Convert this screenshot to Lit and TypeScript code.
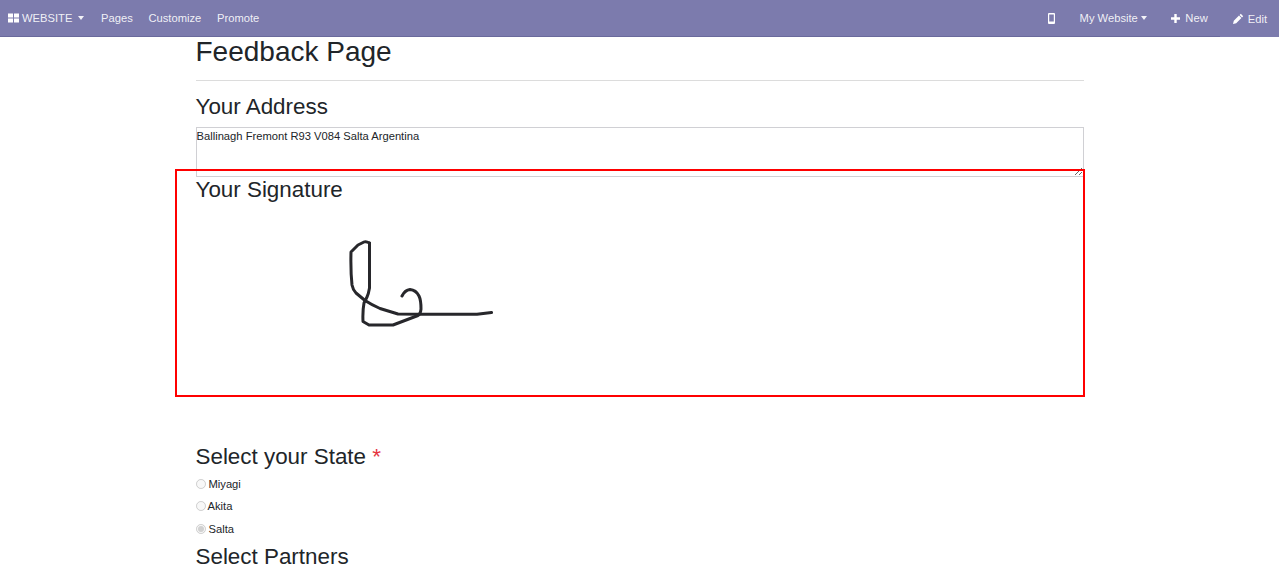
import { LitElement, html, css, svg } from "lit";
import { customElement } from "lit/decorators.js";

@customElement("app-root")
export class AppRoot extends LitElement {
  static styles = css`
    :host { display: block; height: 576px; overflow: hidden; position: relative; background: #fff;
      font-family: "Liberation Sans", Arial, sans-serif; color: #212529; }
    .nav { height: 36px; border-bottom: 1px solid #6a6a9c; background: #7c7bad; color: #fff; display: flex;
      align-items: flex-start; justify-content: space-between; font-size: 11.2px; }
    .group { display: flex; align-items: center; height: 36px; }
    .item { display: flex; align-items: center; gap: 4px; color: rgba(255,255,255,.9); white-space: nowrap; }
    .left .item { margin-left: 15.7px; }
    .left .item.brand { margin-left: 8px; gap: 3px; }
    .caret { width: 0; height: 0; border-left: 3.5px solid transparent; border-right: 3.5px solid transparent;
      border-top: 4px solid rgba(255,255,255,.9); }
    .brand .caret { margin: 0 1.5px 0 2.5px; }
    .right .phone { margin-right: 24.5px; }
    .right .site { margin-right: 24px; gap: 3.5px; }
    .right .new { margin-right: 12px; gap: 5px; }
    .right .edit { box-sizing: border-box; height: 37px; align-self: flex-start; padding: 0 12px 0 13px; gap: 4px;
      background: #7c7bad; }
    svg.i { fill: #fff; display: block; }
    .main { width: 888px; margin: 0 auto; }
    h1 { font-size: 28px; font-weight: 400; line-height: 33.6px; margin: -2px 0 0; }
    hr { border: 0; border-top: 1px solid #dcdcdc; margin: 11px 0 13px; }
    h2 { font-size: 22.4px; font-weight: 400; line-height: 26.88px; margin: 0; }
    .addr { box-sizing: border-box; width: 888px; height: 50px; margin-top: 6.5px; display: block; border: 1px solid #d0d0d4;
      padding: 2px 0; font: 11.2px/13px "Liberation Sans", Arial, sans-serif; color: #212529; border-radius: 0; outline: 0; }
    .sig { display: block; width: 888px; height: 240px; }
    .sig path { fill: none; stroke: #27272b; stroke-width: 3; stroke-linecap: round; stroke-linejoin: round; }
    .req { color: #e5343f; }
    .radios { display: flex; flex-direction: column; font-size: 11.2px; margin: 2px 0 4px; }
    .radio { display: flex; align-items: center; height: 22.5px; }
    .radio input { width: 10px; height: 10px; margin: 0 3px 0 0; }
    .radio.tight input { margin-right: 2px; }
    .mark { position: absolute; left: 175px; top: 169px; width: 910px; height: 228px; box-sizing: border-box;
      border: 2px solid #f00; pointer-events: none; }
  `;

  render() {
    return html`
      <div class="nav">
        <div class="group left">
          <span class="item brand">
            <svg class="i" width="11" height="10" viewBox="0 0 11 10"><path d="M0 .5h5v4H0zM6 .5h5v4H6zM0 5.500h5v4H0zM6 5.500h5v4H6z"/></svg>
            WEBSITE<span class="caret"></span>
          </span>
          <span class="item">Pages</span>
          <span class="item">Customize</span>
          <span class="item">Promote</span>
        </div>
        <div class="group right">
          <span class="item phone">
            <svg class="i" width="7" height="11" viewBox="0 0 7 11"><path fill-rule="evenodd" d="M1 0h5a1 1 0 0 1 1 1v9a1 1 0 0 1-1 1H1a1 1 0 0 1-1-1V1a1 1 0 0 1 1-1zm.2 1.600v7h4.600v-7z"/></svg>
          </span>
          <span class="item site">My Website<span class="caret"></span></span>
          <span class="item new">
            <svg class="i" width="9" height="9" viewBox="0 0 9 9"><path d="M3.300 0h2.400v3.300H9v2.400H5.700V9H3.300V5.700H0V3.300h3.300z"/></svg>
            New
          </span>
          <span class="item edit">
            <svg class="i" width="11" height="11" viewBox="0 0 11 11"><path d="M7.800.8l2.400 2.400-1.200 1.200-2.400-2.400zM6 2.600 8.400 5 3.200 10.200 0 11l.8-3.200z"/></svg>
            Edit
          </span>
        </div>
      </div>
      <div class="main">
        <h1>Feedback Page</h1>
        <hr />
        <h2>Your Address</h2>
        <textarea class="addr" readonly>Ballinagh Fremont R93 V084 Salta Argentina</textarea>
        <h2>Your Signature</h2>
        <svg class="sig" viewBox="196 203 888 240">
          ${svg`<path d="M369.500 242Q366 240 364 241L358 244L351 251Q350.500 270 352 284Q353 289 356 292L365 299.500Q372 304 380 307.500L398 313L420 313.300L477 313.300L491.500 311.500"/>
          <path d="M369.500 242L369.500 287Q368.500 293 367 296L364 302Q362.500 310 363 320.500L369 324L393 324L418 314.500Q420.500 313 421 308Q421 299 419 295Q416 289 410 288.500Q405 289 402 295"/>`}
        </svg>
        <h2>Select your State <span class="req">*</span></h2>
        <div class="radios">
          <label class="radio"><input type="radio" disabled />Miyagi</label>
          <label class="radio tight"><input type="radio" disabled />Akita</label>
          <label class="radio"><input type="radio" disabled checked />Salta</label>
        </div>
        <h2>Select Partners</h2>
      </div>
      <div class="mark"></div>
    `;
  }
}
